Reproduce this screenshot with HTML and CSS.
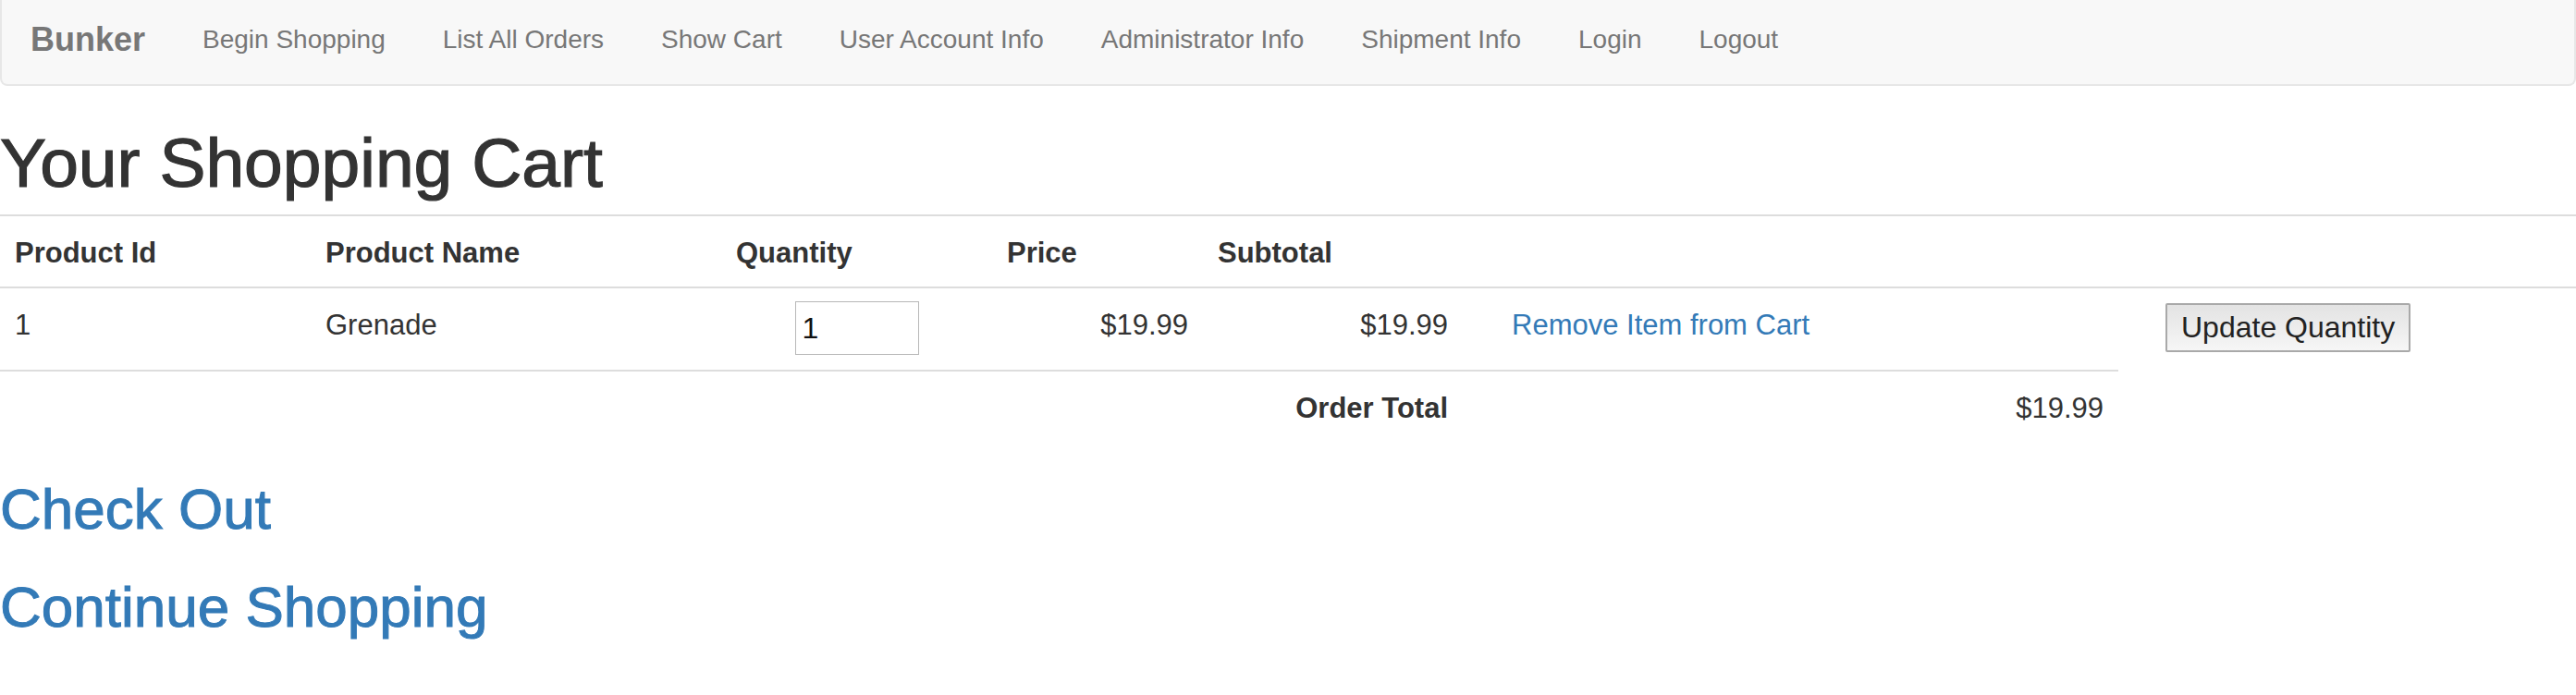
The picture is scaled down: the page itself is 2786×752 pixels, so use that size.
FILE: index.html
```html
<!DOCTYPE html>
<html lang="en">
<head>
<meta charset="utf-8">
<title>Your Shopping Cart</title>
<link rel="stylesheet" href="styles.css">
</head>
<body>
<nav class="navbar">
  <a class="brand" href="#">Bunker</a>
  <ul class="nav">
    <li><a href="#">Begin Shopping</a></li>
    <li><a href="#">List All Orders</a></li>
    <li><a href="#">Show Cart</a></li>
    <li><a href="#">User Account Info</a></li>
    <li><a href="#">Administrator Info</a></li>
    <li><a href="#">Shipment Info</a></li>
    <li><a href="#">Login</a></li>
    <li><a href="#">Logout</a></li>
  </ul>
</nav>

<h1 class="title">Your Shopping Cart</h1>

<table class="cart">
  <colgroup>
    <col class="c-id">
    <col class="c-name">
    <col class="c-qty">
    <col class="c-price">
    <col class="c-sub">
    <col class="c-remove">
    <col class="c-update">
  </colgroup>
  <tbody>
    <tr>
      <th>Product Id</th>
      <th>Product Name</th>
      <th>Quantity</th>
      <th>Price</th>
      <th>Subtotal</th>
      <th></th>
      <th></th>
    </tr>
    <tr>
      <td>1</td>
      <td>Grenade</td>
      <td class="qty-cell"><input class="qty" type="text" value="1"></td>
      <td class="num">$19.99</td>
      <td class="num">$19.99</td>
      <td class="remove-cell"><a class="link" href="#">Remove Item from Cart</a></td>
      <td class="update-cell"><button class="update" type="button">Update Quantity</button></td>
    </tr>
    <tr>
      <td colspan="4"></td>
      <td class="num strong">Order Total</td>
      <td class="num">$19.99</td>
    </tr>
  </tbody>
</table>

<h2 class="action"><a href="#">Check Out</a></h2>
<h2 class="action"><a href="#">Continue Shopping</a></h2>
</body>
</html>
```

FILE: styles.css
```css
html, body {
  margin: 0;
  padding: 0;
  background: #fff;
}

body {
  font-family: "Liberation Sans", Arial, Helvetica, sans-serif;
  color: #333;
  font-size: 28px;
}

/* Navbar */
.navbar {
  display: flex;
  align-items: flex-start;
  height: 91px;
  background: #f8f8f8;
  border: 2px solid #e7e7e7;
  border-top: 0;
  border-radius: 0 0 8px 8px;
  margin: 0 0 40px;
}

.brand {
  display: block;
  padding: 23px 31px 0 31px;
  font-size: 36px;
  line-height: 40px;
  font-weight: bold;
  color: #777;
  text-decoration: none;
}

.nav {
  display: flex;
  list-style: none;
  margin: 0;
  padding: 0;
}

.nav a {
  display: block;
  padding: 23px 31px 0;
  font-size: 28px;
  line-height: 40px;
  color: #777;
  text-decoration: none;
  white-space: nowrap;
}

/* Heading */
.title {
  margin: 0 0 13px;
  font-size: 75px;
  line-height: 86px;
  font-weight: normal;
  color: #333;
  -webkit-text-stroke: 1.2px #333;
}

/* Table */
.cart {
  width: 100%;
  table-layout: fixed;
  border-collapse: collapse;
  border-spacing: 0;
  margin: 0 0 40px;
  font-size: 31px;
}

.c-id { width: 336px; }
.c-name { width: 444px; }
.c-qty { width: 293px; }
.c-price { width: 228px; }
.c-sub { width: 281px; }
.c-remove { width: 709px; }
.c-update { width: 495px; }

.cart th,
.cart td {
  padding: 18px 16px 14px;
  line-height: 44px;
  border-top: 2px solid #ddd;
  vertical-align: top;
  text-align: left;
  white-space: nowrap;
}

.cart th,
.cart .strong {
  font-weight: bold;
}

.cart .num {
  text-align: right;
}

.cart .qty-cell {
  padding-top: 14px;
  padding-bottom: 16px;
}

.qty {
  display: block;
  box-sizing: border-box;
  width: 134px;
  height: 58px;
  margin: 0 auto;
  padding: 0 7px;
  border: 1px solid #b8b8b8;
  font-family: "Liberation Sans", Arial, Helvetica, sans-serif;
  font-size: 32px;
  color: #111;
  background: #fff;
}

.cart .remove-cell {
  padding-left: 53px;
}

.link {
  color: #337ab7;
  text-decoration: none;
}

.cart .update-cell {
  padding-top: 16px;
  padding-left: 51px;
}

.update {
  display: block;
  box-sizing: border-box;
  height: 53px;
  padding: 0 15px;
  border: 2px solid #a9a9a9;
  border-radius: 2px;
  background: linear-gradient(#e3e3e3, #f6f6f6);
  font-family: "Liberation Sans", Arial, Helvetica, sans-serif;
  font-size: 32px;
  color: #222;
}

/* Action links */
.action {
  margin: 40px 0 20px;
  font-size: 62px;
  line-height: 66px;
  font-weight: normal;
  -webkit-text-stroke: 1px #337ab7;
}

.action a {
  color: #337ab7;
  text-decoration: none;
}
```
